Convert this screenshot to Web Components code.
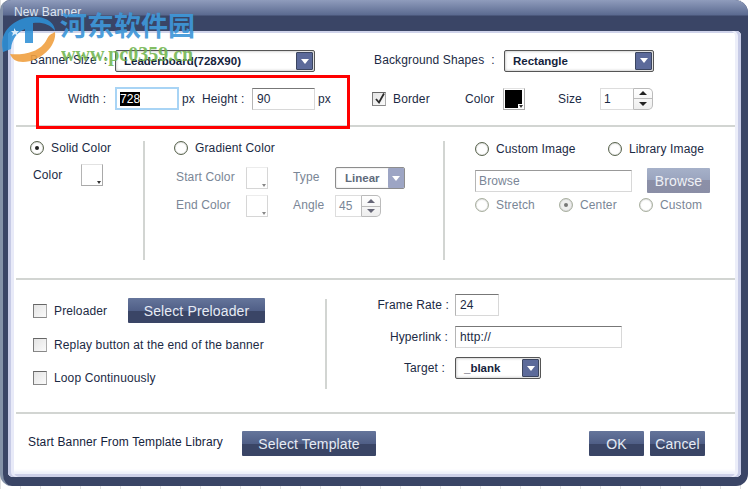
<!DOCTYPE html>
<html>
<head>
<meta charset="utf-8">
<title>New Banner</title>
<style>
  html, body { margin: 0; padding: 0; background: #fff; }
  body { width: 748px; height: 489px; overflow: hidden; font-family: "Liberation Sans", Arial, sans-serif; font-size: 12px; letter-spacing: .13px; color: #1b2a44; }
</style>
</head>
<body>
<ban-dialog heading="New Banner"></ban-dialog>

<script>
// ---- small controls ----
class BanSelect extends HTMLElement {
  constructor() {
    super();
    this.attachShadow({ mode: 'open' });
    this.shadowRoot.innerHTML = `
      <style>
        :host { display: flex; align-items: center; box-sizing: border-box; height: 22px; border: 1px solid #555; border-radius: 2px; background: #fff; box-shadow: inset 0 0 3px #aaa; padding: 0 1px 0 8px; font-weight: bold; font-size: 11.5px; letter-spacing: 0; color: #15233c; }
        :host([disabled]) { border-color: #8d8d8d; color: #6e7a8a; box-shadow: inset 0 0 2px #ccc; padding-right: 0; }
        span { flex: 1; white-space: nowrap; }
        .arrow { width: 17px; height: 18px; background: #5c6a9a; border: 1px solid #3b4560; box-sizing: border-box; display: flex; align-items: center; justify-content: center; border-radius: 1px; }
        :host([disabled]) .arrow { width: 16px; height: 20px; background: #9da5c4; border: 0; }
        i { width: 0; height: 0; border: 4px solid transparent; border-top: 5px solid #fff; border-bottom: 0; }
      </style>
      <span><slot></slot></span><div class="arrow"><i></i></div>`;
  }
}
customElements.define('ban-select', BanSelect);

class BanInput extends HTMLElement {
  constructor() {
    super();
    this.attachShadow({ mode: 'open' });
    this.shadowRoot.innerHTML = `
      <style>
        :host { display: flex; align-items: center; box-sizing: border-box; height: 22px; background: #fff; border: 1px solid #d8d8d8; border-top-color: #777; border-left-color: #b5b5b5; padding-left: 4px; font-size: 12px; color: #1b2a44; white-space: nowrap; }
        :host([focus]) { border: 2px solid #a8d4f5; padding-left: 3px; }
        :host([muted]) { color: #7a8696; border-top-color: #999; padding-left: 3px; }
      </style>
      <slot></slot>`;
  }
}
customElements.define('ban-input', BanInput);

class BanSwatch extends HTMLElement {
  constructor() {
    super();
    this.attachShadow({ mode: 'open' });
    this.shadowRoot.innerHTML = `
      <style>
        :host { display: block; position: relative; box-sizing: border-box; width: 22px; height: 22px; border: 1px solid #a9a9a9; border-top-color: #e2e2e2; border-left-color: #b4b4b4; padding: 1px 2px 1px 1px; background: #fff; }
        :host([disabled]) { border-color: #d6d6d6; border-top-color: #ececec; }
        div { width: 100%; height: 100%; box-sizing: border-box; }
        i { position: absolute; right: 0; bottom: 0; width: 6px; height: 5px; background: #fff; display: flex; align-items: center; justify-content: center; }
        i::after { content: ""; width: 0; height: 0; border: 2.5px solid transparent; border-top: 3px solid #333; border-bottom: 0; }
        :host([disabled]) i::after { border-top-color: #888; }
      </style>
      <div></div><i></i>`;
    const color = this.getAttribute('color');
    if (color) this.shadowRoot.querySelector('div').style.background = color;
  }
}
customElements.define('ban-swatch', BanSwatch);

class BanSpin extends HTMLElement {
  constructor() {
    super();
    this.attachShadow({ mode: 'open' });
    this.shadowRoot.innerHTML = `
      <style>
        :host { display: flex; box-sizing: border-box; height: 22px; font-size: 12px; color: #1b2a44; }
        :host([disabled]) { color: #7a8696; }
        .val { flex: 1; box-sizing: border-box; border: 1px solid #ddd; border-right-color: #bbb; padding: 3px 0 0 3px; background: #fff; }
        .btns { width: 19px; box-sizing: border-box; border: 1px solid #bbb; border-left: 0; border-radius: 0 5px 5px 0; display: flex; flex-direction: column; background: linear-gradient(#fff, #eee); }
        .btns b { flex: 1; display: flex; align-items: center; justify-content: center; }
        .btns b + b { border-top: 1px solid #bbb; }
        .up { width: 0; height: 0; border: 4px solid transparent; border-bottom: 4px solid #222; border-top: 0; }
        .dn { width: 0; height: 0; border: 4px solid transparent; border-top: 4px solid #222; border-bottom: 0; }
        :host([disabled]) .up { border-bottom-color: #667; }
        :host([disabled]) .dn { border-top-color: #667; }
      </style>
      <div class="val"><slot></slot></div>
      <div class="btns"><b><i class="up"></i></b><b><i class="dn"></i></b></div>`;
  }
}
customElements.define('ban-spin', BanSpin);

class BanRadio extends HTMLElement {
  constructor() {
    super();
    this.attachShadow({ mode: 'open' });
    this.shadowRoot.innerHTML = `
      <style>
        :host { display: flex; align-items: center; gap: 7px; white-space: nowrap; font-size: 12px; color: #1b2a44; }
        :host([disabled]) { color: #7a8696; }
        .dot { width: 14px; height: 14px; box-sizing: border-box; border-radius: 50%; border: 1px solid #59644d; background: radial-gradient(circle at 50% 60%, #fff 50%, #e6e6e6); display: flex; align-items: center; justify-content: center; box-shadow: inset 0 0 1px #999; }
        :host([disabled]) .dot { border-color: #a9b0a0; }
        :host([checked]) .dot::after { content: ""; width: 4px; height: 4px; border-radius: 50%; background: #222; }
        :host([disabled][checked]) .dot { background: #eee; }
        :host([disabled][checked]) .dot::after { background: #777; }
      </style>
      <div class="dot"></div><span><slot></slot></span>`;
  }
}
customElements.define('ban-radio', BanRadio);

class BanCheck extends HTMLElement {
  constructor() {
    super();
    this.attachShadow({ mode: 'open' });
    this.shadowRoot.innerHTML = `
      <style>
        :host { display: flex; align-items: center; gap: 7px; white-space: nowrap; font-size: 12px; color: #1b2a44; }
        .box { width: 14px; height: 14px; box-sizing: border-box; border: 1px solid #7a7a7a; border-top-color: #666; border-right-color: #aaa; border-bottom-color: #888; background: linear-gradient(135deg, #e4e4e4, #fafafa); position: relative; }
        svg { position: absolute; left: 1px; top: -1px; display: none; }
        :host([checked]) svg { display: block; }
      </style>
      <div class="box"><svg width="12" height="13" viewBox="0 0 12 13"><path d="M2 7 L5 10.5 L10 1.5" fill="none" stroke="#2b2b2b" stroke-width="1.8"/></svg></div><span><slot></slot></span>`;
  }
}
customElements.define('ban-check', BanCheck);

class BanButton extends HTMLElement {
  constructor() {
    super();
    this.attachShadow({ mode: 'open' });
    this.shadowRoot.innerHTML = `
      <style>
        :host { display: flex; align-items: center; justify-content: center; box-sizing: border-box; height: 25px; font-size: 14px; color: #e6ebf4; white-space: nowrap; border-radius: 1px;
          background: linear-gradient(#65759b 0, #505f87 50%, #3a4566 50%, #3a4566 100%); }
        :host([light]) { color: #eef0f6; background: linear-gradient(#a6b1c9 0, #9aa4be 50%, #8c90a8 50%, #8a8ea6 100%); }
      </style>
      <slot></slot>`;
  }
}
customElements.define('ban-button', BanButton);

// ---- watermark over the top left corner ----
class BanWatermark extends HTMLElement {
  constructor() {
    super();
    this.attachShadow({ mode: 'open' });
    this.shadowRoot.innerHTML = `
      <style>
        :host { position: absolute; left: 0; top: 0; width: 200px; height: 66px; pointer-events: none; }
        svg { position: absolute; left: 0; top: 12px; }
        .cn { position: absolute; left: 60px; top: 8px; font: bold 27px "Noto Sans CJK SC", sans-serif; line-height: 34px; color: #3f97d8; opacity: .92; letter-spacing: 0; white-space: nowrap; }
        .url { position: absolute; left: 61px; top: 44px; font: bold 20px "Liberation Serif", serif; line-height: 20px; color: #6db34a; opacity: .85; letter-spacing: 0; white-space: nowrap; }
      </style>
      <svg width="58" height="52" viewBox="0 0 58 52">
        <path d="M2 34 C1 14 22 3 38 5 C48 6 55 12 55 19 C50 12 42 10 33 11 L33 31 L25 31 L25 17 C18 20 12 26 11 37 L3 40 Z" fill="#2e8fd6" opacity=".88"/>
        <path d="M14 16 l2 3 3 0 -2 2 1 3 -3 -2 -3 2 1 -3 -2 -2 3 0z" fill="#fff" opacity=".8"/>
        <path d="M10 42 C20 43 40 42 47 27 C49 23 51 22 55 20 C57 34 40 50 23 50 C16 50 12 47 10 42 Z" fill="#f0a040" opacity=".9"/>
      </svg>
      <div class="cn">河东软件园</div>
      <div class="url">www.pc0359.cn</div>`;
  }
}
customElements.define('ban-watermark', BanWatermark);

// ---- the dialog ----
class BanDialog extends HTMLElement {
  constructor() {
    super();
    this.attachShadow({ mode: 'open' });
  }
  connectedCallback() {
    this.render();
  }
  get heading() { return this.getAttribute('heading') ?? ''; }
  render() {
    this.shadowRoot.innerHTML = `
      <style>
        :host { display: block; position: relative; width: 748px; height: 489px; font-size: 12px; color: #1b2a44; overflow: hidden;
          background: repeating-linear-gradient(90deg, #e0e0e0 0 1px, #fff 1px 20px); }
        .frame { box-sizing: border-box; height: 486px; display: flex; flex-direction: column; background: #3a4566; border-radius: 10px 13px 12px 12px; border-left: 3px solid #8492a8; }
        .title { height: 31px; flex: none; box-sizing: border-box; padding: 5px 0 0 11px; color: #dfe6f2; font-size: 12px; border-radius: 8px 13px 0 0; background: linear-gradient(#8f9cbc 0, #5b6a90 15px, #3a4566 16px); }
        .panel { flex: 1; margin: 0 7px 9px 5px; box-sizing: border-box; padding: 0 6px 0 8px; background: #fff; border-radius: 5px; display: flex; flex-direction: column;
          box-shadow: inset 3px 0 0 #c7cbe6, inset 6px 0 0 #e8eaf8, inset -3px 0 0 #c7cbe6, inset -6px 0 0 #eceef9, inset 0 2px 0 #cfd3ea, inset 0 -3px 0 #cdd0e8, inset 0 -6px 3px #eef0fa; }
        section { box-sizing: border-box; border-bottom: 2px solid #d2d5d2; flex: none; }
        section:last-child { border: 0; }
        .row { display: flex; align-items: center; }
        .lbl { white-space: nowrap; }
        .up1 { padding-bottom: 2px; }

        .s1 { height: 96px; padding: 18px 0 0 14px; }
        .s1 .row + .row { margin-top: 15px; }
        .s2 { height: 153px; padding-top: 14px; display: grid; grid-template-columns: 127px 300px 1fr; }
        .s2 .col { height: 119px; box-sizing: border-box; }
        .s2 .col + .col { border-left: 2px solid #d2d5d2; }
        .s3 { height: 134px; padding: 14px 0 0 17px; display: grid; grid-template-columns: 292px 1fr; }
        .s4 { padding: 17px 0 0 12px; display: flex; }
        .left { display: flex; flex-direction: column; }
        .right { border-left: 2px solid #d2d5d2; height: 90px; margin-top: 5px; }
        .rr { display: flex; align-items: center; height: 22px; }
        .rr .lbl { width: 128px; text-align: right; padding-right: 6px; box-sizing: border-box; }
      </style>
      <div class="frame">
        <div class="title">${this.heading}</div>
        <div class="panel">

          <section class="s1">
            <div class="row">
              <span class="lbl up1" style="width:85px">Banner Size&nbsp; :</span>
              <ban-select style="width:200px;margin-top:1px">Leaderboard(728X90)</ban-select>
              <span class="lbl up1" style="margin-left:59px;width:130px">Background Shapes &nbsp;:</span>
              <ban-select style="width:150px">Rectangle</ban-select>
            </div>
            <div class="row">
              <span class="lbl" style="margin-left:38px;width:47px">Width :</span>
              <ban-input focus style="width:64px;height:23px"><span style="background:#000;color:#fff">728</span></ban-input>
              <span class="lbl" style="margin-left:3px;width:20px">px</span>
              <span class="lbl" style="width:50px">Height :</span>
              <ban-input style="width:63px">90</ban-input>
              <span class="lbl" style="margin-left:3px;width:54px">px</span>
              <ban-check checked style="width:93px">Border</ban-check>
              <span class="lbl" style="width:38px">Color</span>
              <ban-swatch color="#000"></ban-swatch>
              <span class="lbl" style="margin-left:33px;width:42px">Size</span>
              <ban-spin style="width:53px">1</ban-spin>
            </div>
          </section>

          <section class="s2">
            <div class="col" style="padding-left:14px">
              <ban-radio checked>Solid Color</ban-radio>
              <div class="row" style="margin-top:9px;padding-left:3px">
                <span class="lbl" style="width:48px">Color</span>
                <ban-swatch></ban-swatch>
              </div>
            </div>
            <div class="col" style="padding-left:29px;color:#7a8696">
              <ban-radio>Gradient Color</ban-radio>
              <div class="row" style="margin-top:12px;padding-left:2px;height:22px">
                <span class="lbl up1" style="width:70px">Start Color</span>
                <ban-swatch disabled></ban-swatch>
                <span class="lbl up1" style="margin-left:25px;width:42px">Type</span>
                <ban-select disabled style="width:70px;padding-left:9px;color:#5f6b7c">Linear</ban-select>
              </div>
              <div class="row" style="margin-top:6px;padding-left:2px;height:22px">
                <span class="lbl up1" style="width:70px">End Color</span>
                <ban-swatch disabled></ban-swatch>
                <span class="lbl up1" style="margin-left:25px;width:42px">Angle</span>
                <ban-spin disabled style="width:46px">45</ban-spin>
              </div>
            </div>
            <div class="col" style="padding-left:30px">
              <div class="row" style="margin-top:1px"><ban-radio style="width:133px">Custom Image</ban-radio><ban-radio>Library Image</ban-radio></div>
              <div class="row" style="margin-top:12px">
                <ban-input muted style="width:157px">Browse</ban-input>
                <ban-button light style="margin-left:15px;width:63px">Browse</ban-button>
              </div>
              <div class="row" style="margin-top:5px">
                <ban-radio disabled style="width:84px">Stretch</ban-radio>
                <ban-radio disabled checked style="width:80px">Center</ban-radio>
                <ban-radio disabled>Custom</ban-radio>
              </div>
            </div>
          </section>

          <section class="s3">
            <div class="left">
              <div class="row" style="margin-top:4px;height:25px">
                <ban-check style="width:95px">Preloader</ban-check>
                <ban-button style="width:137px">Select Preloader</ban-button>
              </div>
              <ban-check style="margin-top:11px;height:22px">Replay button at the end of the banner</ban-check>
              <ban-check style="margin-top:11px;height:22px">Loop Continuously</ban-check>
            </div>
            <div class="right">
              <div class="rr" style="margin-top:-5px"><span class="lbl">Frame Rate :</span><ban-input style="width:44px">24</ban-input></div>
              <div class="rr" style="margin-top:10px"><span class="lbl" style="padding-right:7px">Hyperlink :</span><ban-input style="width:167px">http://</ban-input></div>
              <div class="rr" style="margin-top:9px"><span class="lbl" style="padding-right:10px">Target :</span><ban-select style="width:86px">_blank</ban-select></div>
            </div>
          </section>

          <section class="s4">
            <span class="lbl" style="width:214px;padding-top:4px;color:#15233c">Start Banner From Template Library</span>
            <ban-button style="width:134px">Select Template</ban-button>
            <ban-button style="width:55px;margin-left:213px">OK</ban-button>
            <ban-button style="width:55px;margin-left:6px">Cancel</ban-button>
          </section>

        </div>
      </div>

      <!-- annotation and watermark that lie over the dialog -->
      <div style="position:absolute;left:36px;top:75px;width:314px;height:54px;box-sizing:border-box;border:3px solid #f00"></div>
      <ban-watermark></ban-watermark>`;
  }
}
customElements.define('ban-dialog', BanDialog);
</script>
</body>
</html>
